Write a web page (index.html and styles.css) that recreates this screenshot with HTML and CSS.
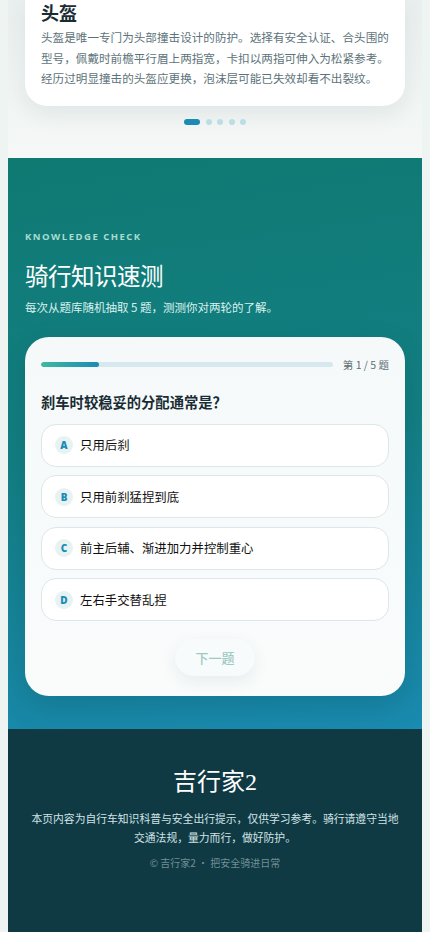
FILE: index.html
```html
<!DOCTYPE html>
<html lang="zh-CN">
<head>
  <meta charset="UTF-8" />
  <meta name="viewport" content="width=device-width, initial-scale=1.0" />
  <title>吉行家2 · 骑行知识</title>
  <link rel="stylesheet" href="styles.css">
</head>
<body>
  <section class="gear">
    <div class="gear-card">
      <h3>头盔</h3>
      <p>头盔是唯一专门为头部撞击设计的防护。选择有安全认证、合头围的型号，佩戴时前檐平行眉上两指宽，卡扣以两指可伸入为松紧参考。经历过明显撞击的头盔应更换，泡沫层可能已失效却看不出裂纹。</p>
    </div>
    <div class="dots">
      <span class="dot active"></span>
      <span class="dot"></span>
      <span class="dot"></span>
      <span class="dot"></span>
      <span class="dot"></span>
    </div>
  </section>

  <section class="quiz">
    <div class="eyebrow">KNOWLEDGE CHECK</div>
    <h2>骑行知识速测</h2>
    <p class="lead">每次从题库随机抽取 5 题，测测你对两轮的了解。</p>

    <div class="quiz-card">
      <div class="progress-row">
        <div class="track"><div class="fill" style="width: 20%"></div></div>
        <span class="count">第 1 / 5 题</span>
      </div>
      <div class="question">刹车时较稳妥的分配通常是？</div>
      <div class="options">
        <button class="option"><span class="badge">A</span>只用后刹</button>
        <button class="option"><span class="badge">B</span>只用前刹猛捏到底</button>
        <button class="option"><span class="badge">C</span>前主后辅、渐进加力并控制重心</button>
        <button class="option"><span class="badge">D</span>左右手交替乱捏</button>
      </div>
      <div class="actions">
        <button class="next" disabled>下一题</button>
      </div>
    </div>
  </section>

  <footer class="footer">
    <div class="brand">吉行家2</div>
    <p>本页内容为自行车知识科普与安全出行提示，仅供学习参考。骑行请遵守当地交通法规，量力而行，做好防护。</p>
    <div class="copy">© 吉行家2 · 把安全骑进日常</div>
  </footer>
</body>
</html>
```

FILE: styles.css
```css
body {
  margin: 0 8px;
  background-color: #edf4f1;
  font-family: "Noto Sans CJK SC", "Open Sans", sans-serif;
  color: #1d3038;
}
button {
  font-family: inherit;
}

/* gear carousel */
.gear {
  background: linear-gradient(180deg, #e9efee 0%, #f5f8f7 100%);
  padding: 0 17px 33px;
}
.gear-card {
  background-color: #fff;
  border-radius: 0 0 22px 22px;
  padding: 1px 16px 17px;
  box-shadow: 0 8px 22px rgba(30, 60, 70, 0.08);
}
.gear-card h3 {
  margin: 0 0 4px;
  font-size: 18px;
  line-height: 22px;
  font-weight: 700;
  color: #1a2c33;
}
.gear-card p {
  margin: 0;
  font-size: 11.6px;
  line-height: 20.5px;
  color: #5d7379;
}
.dots {
  display: flex;
  justify-content: center;
  gap: 5.5px;
  margin-top: 13px;
}
.dot {
  width: 6px;
  height: 6px;
  border-radius: 3px;
  background-color: #bcdde6;
}
.dot.active {
  width: 16px;
  background-color: #1b8bb4;
}

/* quiz */
.quiz {
  background: linear-gradient(172deg, #0f7a72 0%, #137f84 50%, #1a8bb1 100%);
  padding: 72px 17px 33px;
}
.eyebrow {
  font-family: "Open Sans", sans-serif;
  font-size: 9.5px;
  font-weight: 700;
  letter-spacing: 1.5px;
  color: #a9dbd2;
  line-height: 14px;
}
.quiz h2 {
  margin: 18px 0 0;
  font-family: serif;
  font-weight: 400;
  font-size: 23.5px;
  line-height: 30px;
  color: #fff;
}
.lead {
  margin: 6px 0 21px;
  font-size: 11.5px;
  line-height: 18px;
  color: #dcf1ee;
}
.quiz-card {
  background: linear-gradient(180deg, #f5f9fa 0%, #fafcfc 100%);
  border-radius: 24px;
  padding: 21px 16px 20px;
  box-shadow: 0 12px 30px rgba(8, 50, 60, 0.18);
}
.progress-row {
  display: flex;
  align-items: center;
  gap: 10px;
}
.track {
  flex: 1;
  height: 5px;
  border-radius: 3px;
  background-color: #d6e9ef;
  overflow: hidden;
}
.fill {
  height: 100%;
  border-radius: 3px;
  background: linear-gradient(90deg, #3dbb9f, #1b8bb4);
}
.count {
  font-size: 10.5px;
  line-height: 14px;
  color: #5e6f74;
}
.question {
  margin: 20px 0 12px;
  font-size: 14.3px;
  line-height: 20px;
  font-weight: 700;
  color: #1a2c33;
}
.options {
  display: flex;
  flex-direction: column;
  gap: 8.5px;
}
.option {
  display: flex;
  align-items: center;
  gap: 7px;
  padding: 11.5px 13px;
  background-color: #fff;
  border: 1px solid #dde6e8;
  border-radius: 15px;
  font-size: 12.4px;
  line-height: 18px;
  color: #111;
  text-align: left;
  cursor: pointer;
}
.badge {
  width: 18px;
  height: 18px;
  border-radius: 50%;
  background-color: #e7f2f2;
  color: #1b8bb4;
  font-family: "Open Sans", sans-serif;
  font-size: 10px;
  font-weight: 800;
  display: flex;
  align-items: center;
  justify-content: center;
}
.actions {
  display: flex;
  justify-content: center;
  margin-top: 18px;
}
.next {
  width: 80px;
  height: 37px;
  border: none;
  border-radius: 19px;
  background-color: #f8fbfb;
  box-shadow: 0 6px 16px rgba(20, 60, 70, 0.08);
  color: #9fcac3;
  font-size: 13px;
  font-weight: 500;
}

/* footer */
.footer {
  background-color: #0f3a44;
  padding: 38px 22px 70px;
  text-align: center;
}
.brand {
  font-family: serif;
  font-size: 24px;
  line-height: 30px;
  color: #fff;
}
.footer p {
  margin: 12px 0 9px;
  font-size: 10.8px;
  line-height: 19px;
  color: #d3e3e5;
}
.copy {
  font-size: 10px;
  line-height: 14px;
  color: #718f95;
}
```
